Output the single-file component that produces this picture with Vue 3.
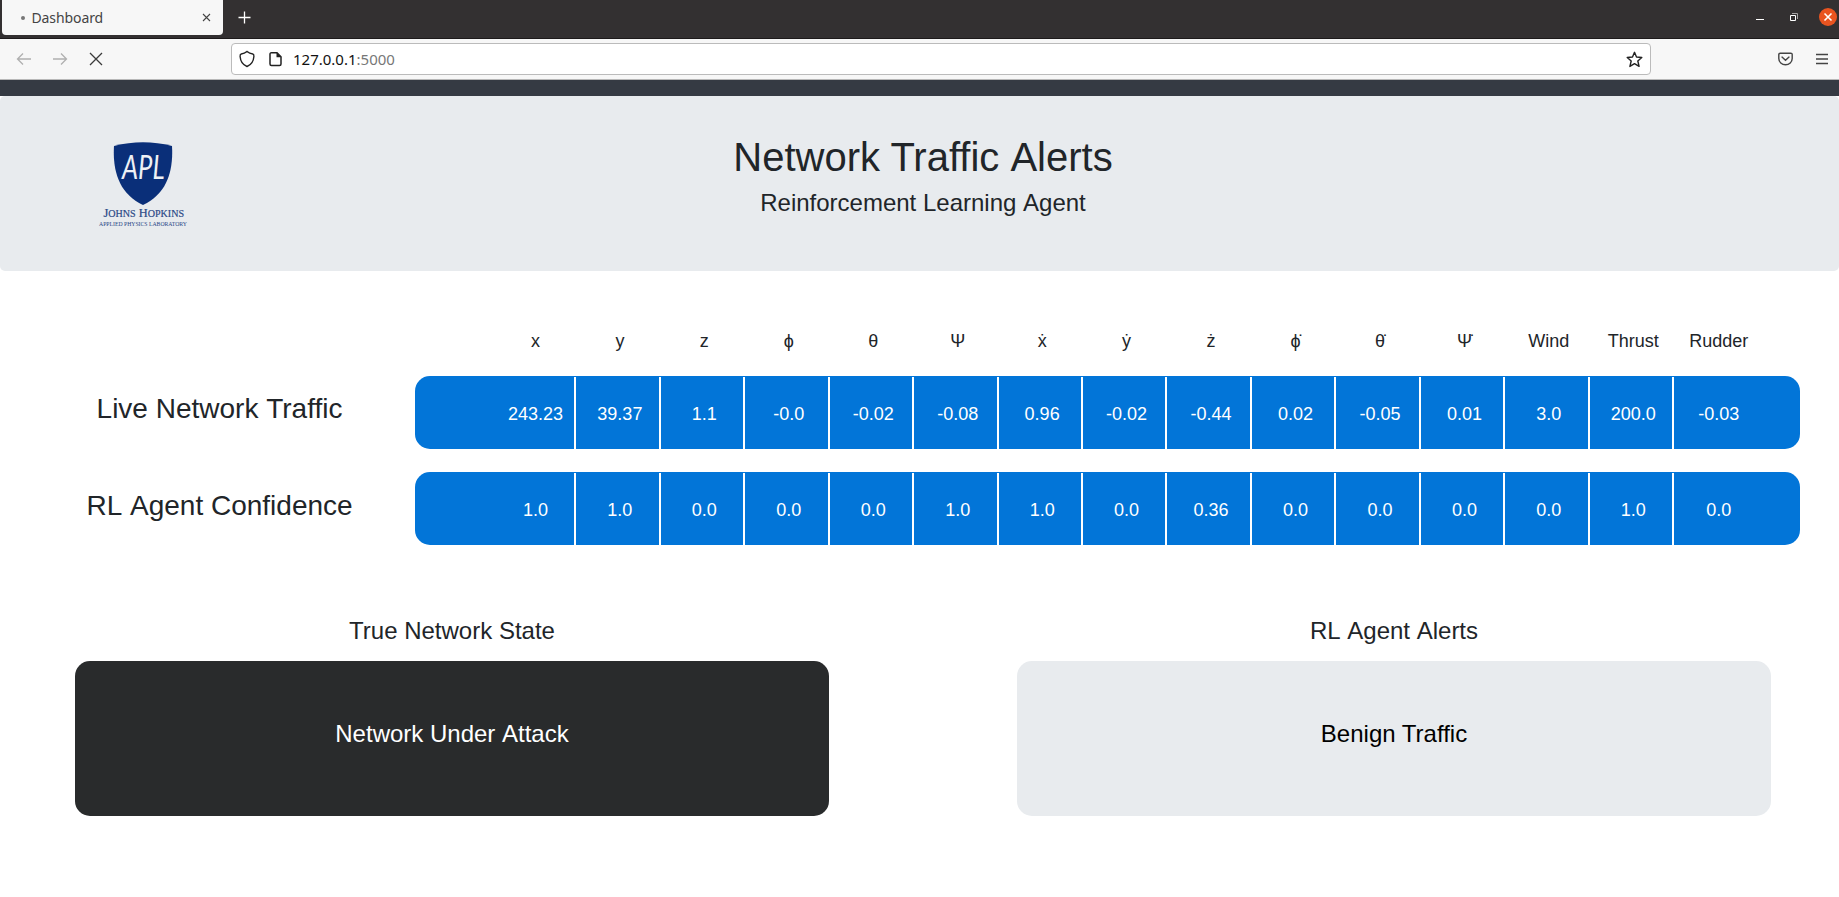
<script setup>
const labels = ['x', 'y', 'z', 'ϕ', 'θ', 'Ψ', 'ẋ', 'ẏ', 'ż', 'ϕ̇', 'θ̇', 'Ψ̇', 'Wind', 'Thrust', 'Rudder']
const rows = [
  { name: ['Live', 'Network', 'Traffic'], values: ['243.23', '39.37', '1.1', '-0.0', '-0.02', '-0.08', '0.96', '-0.02', '-0.44', '0.02', '-0.05', '0.01', '3.0', '200.0', '-0.03'] },
  { name: ['RL', 'Agent', 'Confidence'], values: ['1.0', '1.0', '0.0', '0.0', '0.0', '1.0', '1.0', '0.0', '0.36', '0.0', '0.0', '0.0', '0.0', '1.0', '0.0'] },
]
</script>

<template>
  <div class="window">
    <header class="tabs">
      <div class="tab">
        <span class="dot"></span>
        <span class="tab-title">Dashboard</span>
        <svg class="tab-close" width="9" height="9" viewBox="0 0 9 9"><path d="M1 1l7 7M8 1l-7 7" /></svg>
      </div>
      <svg class="new-tab" width="13" height="13" viewBox="0 0 13 13"><path d="M6.500 .5v12M.5 6.500h12" /></svg>
      <div class="controls">
        <svg width="8" height="18" viewBox="0 0 8 18"><path d="M0 11.500h8" stroke="#fff" /></svg>
        <svg width="8" height="18" viewBox="0 0 8 18"><path d="M2 5.500h5.500v5.500" stroke="#a5a3a3" /><path d="M.5 7.500h5v5h-5z" stroke="#fff" /></svg>
        <svg width="18" height="18" viewBox="0 0 18 18"><circle cx="9" cy="9" r="9" fill="#e95420" /><path d="M5.500 5.500l7 7M12.500 5.500l-7 7" stroke="#fff" stroke-width="1.600" /></svg>
      </div>
    </header>

    <nav class="toolbar">
      <div class="nav-buttons">
        <svg width="16" height="14" viewBox="0 0 16 14"><path d="M15 7H1.500M7 1.500L1.500 7L7 12.500" stroke="#b0b0b0" stroke-width="1.300" /></svg>
        <svg width="16" height="14" viewBox="0 0 16 14"><path d="M1 7h13.500M9 1.500L14.500 7L9 12.500" stroke="#b0b0b0" stroke-width="1.300" /></svg>
        <svg width="14" height="14" viewBox="0 0 14 14"><path d="M1 1l12 12M13 1L1 13" stroke="#3a3a3a" stroke-width="1.300" /></svg>
      </div>
      <div class="address">
        <svg width="16" height="18" viewBox="0 0 16 18"><path d="M8 1.500C6 3.200 4 3.800 2.200 4C1 4.200 1 5 1.100 6.500C1.500 11.500 3.500 14.800 8 16.500C12.500 14.800 14.500 11.500 14.900 6.500C15 5 15 4.200 13.800 4C12 3.800 10 3.200 8 1.500z" stroke="#222" stroke-width="1.400" /></svg>
        <svg class="page" width="13" height="16" viewBox="0 0 13 16"><path d="M2.700 1.700H8L12 5.700V13a1.500 1.500 0 0 1-1.500 1.500H2.500A1.500 1.500 0 0 1 1 13V3.200A1.500 1.500 0 0 1 2.700 1.700z" stroke="#222" stroke-width="1.500" /><path d="M7.500 1.500v4.800h4.800z" fill="#222" /></svg>
        <span class="url">127.0.0.1<i>:5000</i></span>
        <svg class="star" width="17" height="17" viewBox="0 0 17 17"><path d="M8.500 1.300L10.500 6L15.800 6.500L11.800 10L13.100 15.400L8.500 12.600L3.900 15.400L5.200 10L1.200 6.500L6.500 6z" stroke="#222" stroke-width="1.400" stroke-linejoin="round" /></svg>
      </div>
      <div class="tools">
        <svg width="15" height="14" viewBox="0 0 15 14"><path d="M2.200 1.200h10.600a1.400 1.400 0 0 1 1.400 1.400v4a6.700 6.200 0 0 1-13.400 0v-4a1.400 1.400 0 0 1 1.400-1.400z" stroke="#444" stroke-width="1.400" /><path d="M4 5.100l3.500 3.200L11 5.100" stroke="#444" stroke-width="1.400" stroke-linecap="round" /></svg>
        <svg width="12" height="12" viewBox="0 0 12 12"><path d="M0 1.500h12M0 6h12M0 10.500h12" stroke="#444" stroke-width="1.500" /></svg>
      </div>
    </nav>

    <div class="strip"></div>
    <section class="hero">
      <svg class="logo" width="92" height="90" viewBox="0 0 92 90">
        <path d="M16 6Q45-1.500 74 6C75.500 31 69 54 45 65C21 54 14.500 31 16 6z" fill="#0a2f79" />
        <text x="24" y="38.500" font-family="Lato, sans-serif" font-size="32" font-style="italic" textLength="42.500" lengthAdjust="spacingAndGlyphs" fill="#eef1f5">APL</text>
        <g font-family="'Liberation Serif', serif" fill="#2a4886">
          <text x="5.500" y="77" font-size="13" textLength="80.500" lengthAdjust="spacingAndGlyphs" stroke="#2a4886" stroke-width=".2">J<tspan font-size="10.500">OHNS</tspan> H<tspan font-size="10.500">OPKINS</tspan></text>
          <text x="1" y="85.500" font-size="6" textLength="88" lengthAdjust="spacingAndGlyphs">APPLIED PHYSICS LABORATORY</text>
        </g>
      </svg>
      <div class="titles">
        <h1>Network Traffic <span class="word">Alerts</span></h1>
        <h4>Reinforcement Learning <span class="word">Agent</span></h4>
      </div>
    </section>

    <main>
      <div class="line heads">
        <div class="cells">
          <span v-for="l in labels" :key="l">{{ l }}</span>
        </div>
      </div>
      <div v-for="r in rows" :key="r.name[0]" class="line">
        <h3><template v-for="w in r.name" :key="w"><span class="word">{{ w }}</span>{{ ' ' }}</template></h3>
        <div class="cells bar">
          <span v-for="(v, i) in r.values" :key="i">{{ v }}</span>
        </div>
      </div>
      <div class="panels">
        <section>
          <h4>True Network State</h4>
          <div class="panel attack">Network Under <span class="word">Attack</span></div>
        </section>
        <section>
          <h4><span class="word">RL</span> <span class="word">Agent</span> <span class="word">Alerts</span></h4>
          <div class="panel benign">Benign Traffic</div>
        </section>
      </div>
    </main>
  </div>
</template>

<style>
body { margin: 0; background: #fff; overflow: hidden; }
</style>

<style scoped>
* { box-sizing: border-box; }
h1, h3, h4 { margin: 0; font-weight: 400; }
svg { display: block; flex: none; fill: none; }
.window { height: 897px; font-family: "Liberation Sans", Arial, sans-serif; color: #212529; background: #fff; }
.word { display: inline-block; }

.tabs { display: flex; height: 39px; background: #333031; border-bottom: 1px solid #1d1a1b; }
.tab { display: flex; align-items: center; width: 221px; height: 35px; margin-left: 2px; padding: 0 12px 0 19px; background: #f7f7f7; border-radius: 0 0 4px 4px; }
.dot { width: 4px; height: 4px; border-radius: 50%; background: #777; }
.tab-title { margin-left: 6.5px; font: 14px/20px "Noto Sans", sans-serif; color: #444; letter-spacing: -.1px; }
.tab-close { margin-left: auto; stroke: #444; stroke-width: 1.1; }
.new-tab { margin: 11px 0 0 15px; stroke: #fff; stroke-width: 1.3; }
.controls { display: flex; gap: 26px; margin: 8px 2px 0 auto; }
.controls svg:last-child { margin-left: -5px; }

.toolbar { display: flex; align-items: center; height: 41px; background: #f7f7f7; border-bottom: 1px solid #b8b8b8; }
.nav-buttons { display: flex; align-items: center; gap: 20px; width: 231px; padding-left: 16px; }
.nav-buttons svg:last-child { margin-left: 1px; }
.address { display: flex; align-items: center; width: 1420px; height: 32px; padding: 0 7px; background: #fff; border: 1px solid #bbb; border-radius: 4px; }
.page { margin-left: 13.5px; }
.url { margin: 0 0 0 11.5px; font: 15px/20px "Noto Sans", sans-serif; color: #111; }
.url i { font-style: normal; color: #777; }
.star { margin-left: auto; }
.tools { display: flex; align-items: center; gap: 23px; margin: 0 11px 0 auto; }

.strip { height: 16px; background: #353a43; }
.hero { display: flex; height: 175px; background: #e8ebee; border-radius: 5px; }
.logo { margin: 44px 0 0 98px; }
.titles { flex: 1; padding: 37px 183px 0 0; text-align: center; }
.titles h1 { font-size: 40px; line-height: 48px; }
.titles h4 { margin-top: 7px; font-size: 24px; line-height: 29px; }

.line { display: flex; margin-bottom: 23px; padding-right: 39px; }
.line h3 { width: 415px; padding: 16px 0 0 24px; font-size: 28px; line-height: 34px; text-align: center; }
.line:nth-child(3) h3 { padding-top: 17px; }
.cells { display: grid; grid-template-columns: repeat(15, 84.46px); width: 1385px; padding: 1px 0 0 76.8px; font-size: 18px; text-align: center; line-height: 74px; }
.cells span { padding-left: 4.8px; border-right: 2px solid transparent; white-space: nowrap; }
.bar { height: 73px; background: #0275d8; border-radius: 15px; color: #fff; }
.bar span { height: 72px; border-right-color: #fff; }
.cells span:last-child { border-right: 0; }
.heads { height: 105px; margin: 0; padding: 56px 39px 0 415px; }
.heads .cells { line-height: 27px; }

.panels { display: flex; justify-content: space-between; margin-top: 71px; padding: 0 68px 0 75px; }
.panels section { width: 754px; }
.panels h4 { font-size: 24px; line-height: 29px; text-align: center; }
.panel { height: 155px; margin-top: 16px; padding-top: 58px; border-radius: 15px; font-size: 24px; line-height: 29px; text-align: center; }
.attack { background: #292b2c; color: #fff; }
.benign { background: #e8ebee; color: #000; }
</style>
